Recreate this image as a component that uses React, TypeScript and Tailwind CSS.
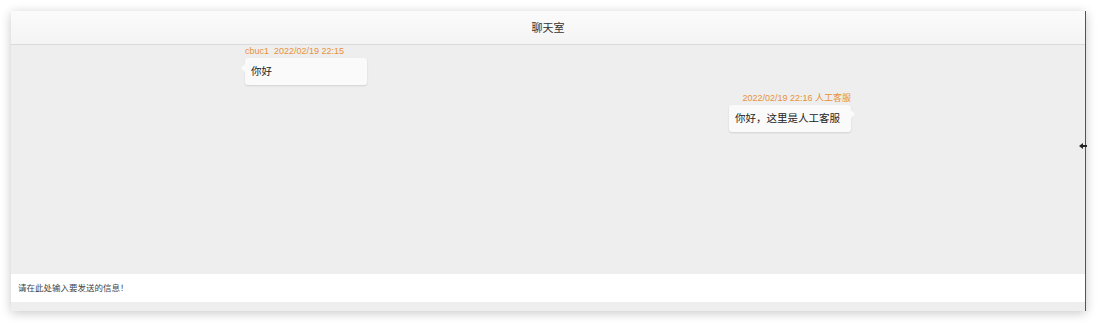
const messages = [
  { id: 1, mine: false, name: "cbuc1", time: "2022/02/19 22:15", text: "你好" },
  { id: 2, mine: true, name: "人工客服", time: "2022/02/19 22:16", text: "你好，这里是人工客服" },
];

const App = () => {
  return (
    <div
      className="h-[323px] w-[1098px] bg-white pl-[11px] pt-[11px]"
      style={{ fontFamily: '"Liberation Sans", "Noto Sans CJK SC", sans-serif' }}
    >
      <div className="relative flex h-[300px] w-[1075px] flex-col border-r border-[#4d5660] bg-[#eeeeee] shadow-[0_2px_10px_rgba(0,0,0,0.22)]">
        <header className="flex h-[34px] shrink-0 items-center justify-center border-b border-[#dadada] bg-gradient-to-b from-[#fbfbfb] to-[#f4f4f4]">
          <span className="pt-px text-[11px] text-[#333333]">聊天室</span>
        </header>

        <div className="flex-1 overflow-hidden">
          <div className="mx-auto flex w-[606px] flex-col gap-[7px]">
            {messages.map((m) => (
              <ChatMessage key={m.id} {...m} />
            ))}
          </div>
        </div>

        <div className="flex h-[28px] shrink-0 items-center bg-white pl-[7px]">
          <span className="text-[8.5px] text-[#444444]">请在此处输入要发送的信息！</span>
        </div>
        <div className="h-[9px] shrink-0 bg-[#eeeeee]" />

        {/* cursor */}
        <svg
          className="absolute left-[1068px] top-[131px]"
          width="8"
          height="8"
          viewBox="0 0 8 8"
        >
          <path d="M0 4 L4 1 L4 3 L8 3 L8 5 L4 5 L4 7 Z" fill="#222" />
        </svg>
      </div>
    </div>
  );
};

const ChatMessage = ({
  mine,
  name,
  time,
  text,
}: {
  mine: boolean;
  name: string;
  time: string;
  text: string;
}) => (
  <div className={`flex flex-col ${mine ? "items-end" : "items-start"}`}>
    <p className="h-[12px] whitespace-pre text-[9px] leading-[12px] text-[#e8913b]">
      {mine ? `${time} ${name}` : `${name}  ${time}`}
    </p>
    <div className="relative mt-px flex h-[27px] min-w-[122px] items-center rounded-[3px] bg-[#fafafa] px-[6px] text-[10.5px] text-[#222222] shadow-[0_1px_2px_rgba(0,0,0,0.12)]">
      {text}
      {mine ? (
        <span className="absolute -right-[4px] top-[5px] h-0 w-0 border-y-[4px] border-l-[4px] border-y-transparent border-l-[#fafafa]" />
      ) : (
        <span className="absolute -left-[4px] top-[6px] h-0 w-0 border-y-[4px] border-r-[4px] border-y-transparent border-r-[#fafafa]" />
      )}
    </div>
  </div>
);

export default App;
